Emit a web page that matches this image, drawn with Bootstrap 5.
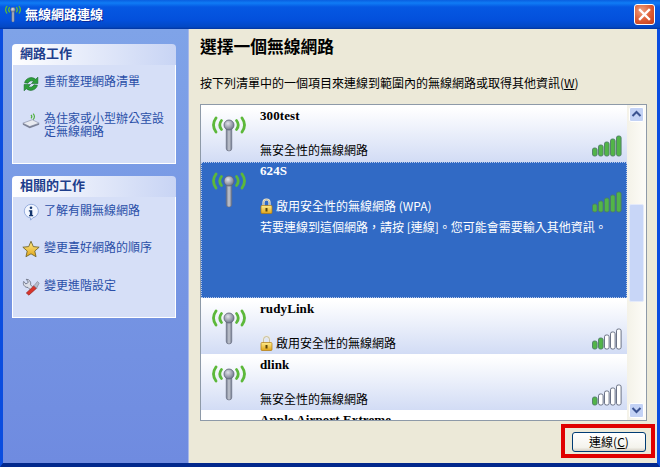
<!DOCTYPE html>
<html lang="zh-Hant">
<head>
  <meta charset="UTF-8" />
  <title>無線網路連線</title>
  <link href="https://cdn.jsdelivr.net/npm/bootstrap@5.3.0/dist/css/bootstrap.min.css" rel="stylesheet" />
  <style>
    html, body { height: 100%; margin: 0; overflow: hidden; }
    body { font-family: "Noto Sans CJK TC", "Liberation Sans", sans-serif; font-size: 12px; line-height: 12px; color: #000; background: #ECE9D8; }

    .xp-window { width: 660px; height: 467px; }
    .xp-title { height: 29px; padding: 0 5px 0 3px; color: #fff; font-size: 13px; font-weight: 700; text-shadow: 1px 1px 0 #0a2a9a;
      background: linear-gradient(#0A5FE0 0, #0F7CF5 3px, #0558E2 7px, #0350DC 20px, #0348C4 27px, #02349E 29px); }
    .xp-title-icon { width: 20px; height: 20px; margin-right: 2px; }
    .xp-close { width: 21px; height: 21px; border: 1px solid #fff; border-radius: 3px; background: radial-gradient(circle at 35% 30%, #F0A080, #DC5A32 55%, #C23A18); }
    .xp-frame { border-left: 3px solid #0A4DE0; border-right: 3px solid #0A4DE0; border-bottom: 4px solid #02288C; min-height: 0; }

    .xp-side { width: 186px; padding: 15px 12px 0 9px; background: linear-gradient(#7FA3E8, #6F8BE0); border-right: 1px solid #A8B8E8; }
    .xp-box + .xp-box { margin-top: 12px; }
    .xp-box-head { height: 21px; padding: 0 0 3px 8px; font-weight: 700; font-size: 13px; color: #1E3E8C; border-radius: 4px 4px 0 0; background: linear-gradient(90deg, #fff, #C8D4F4); }
    .xp-box-body { background: #D6DFF7; border: 1px solid #fff; border-top: 0; padding-left: 7px; color: #2A4FA8; }
    .xp-box-one { height: 99px; }
    .xp-box-two { height: 121px; }
    .xp-task { height: 37.5px; }
    .xp-box-one .xp-task { height: 33.5px; }
    .xp-task-icon { width: 18px; height: 18px; flex: none; margin: 2px 4px 0 2px; }
    .xp-task-two { line-height: 13px; margin-top: 2px; }
    .xp-box-one .xp-task-two { margin-top: 1px; }

    .xp-main { padding: 7px 10px 0 11px; min-width: 0; }
    .xp-heading { font-size: 16.75px; line-height: 20px; font-weight: 700; height: 20px; margin: 0 0 20px; }
    .xp-lead { height: 15px; margin: 0 0 13px; white-space: nowrap; line-height: 14px; }
    .xp-list { height: 317px; border: 1px solid #8E9AA8; background: #fff; }
    .xp-items { width: 426px; overflow: hidden; }
    .xp-net { height: 56px; flex: none; padding: 4px 5px 0 10px; background: linear-gradient(#fff 5%, #D2DCF5); }
    .xp-net.xp-first { height: 57px; }
    .xp-net.xp-active { height: 136px; background: #316AC5; color: #fff; border: 1px dotted #B8C8E8; padding: 1px 4px 0 9px; }
    .xp-antenna { width: 36px; height: 42px; flex: none; margin-top: 4px; margin-right: 13px; }
    .xp-active .xp-antenna { margin-top: 5px; }
    .xp-name { font-family: "Liberation Serif", serif; font-weight: 700; font-size: 13px; line-height: 13px; letter-spacing: .1px; }
    .xp-net-info { position: relative; flex: 1; min-width: 0; }
    .xp-status { position: absolute; left: 0; top: 34px; line-height: 13px; white-space: nowrap; }
    .xp-status.xp-locked { top: 33px; }
    .xp-active .xp-status.xp-locked { top: 34px; }
    .xp-hint { position: absolute; left: 0; top: 56px; line-height: 13px; white-space: nowrap; }
    .xp-lock { width: 13px; height: 16px; margin-right: 3px; vertical-align: -3px; }
    .xp-bars { position: absolute; right: 0; top: 26px; width: 30px; height: 22px; }
    .xp-active .xp-bars { top: 27px; }
    .xp-net-cut { height: 10px; padding: 3px 0 0 59px; background: #fff; overflow: hidden; }
    .xp-scroll { width: 19px; padding: 2px 2px; background: linear-gradient(90deg, #F4F2E8, #FDFCF8); }
    .xp-arrow { width: 15px; height: 15px; flex: none; border: 1px solid #fff; border-radius: 2px; background: #C3D2F5; }
    .xp-track { min-height: 0; position: relative; }
    .xp-thumb { position: absolute; left: 0; top: 82px; width: 15px; height: 98px; background: #C8D6F7; border: 1px solid #E4EAFA; border-radius: 2px; }

    .xp-foot { height: 43px; }
    .xp-connect { position: relative; width: 74px; height: 20px; margin: 11px 1px 0 0; padding: 0; font-size: 12px; line-height: 18px; color: #000; border: 1px solid #003C74; border-radius: 3px; background: linear-gradient(#fff, #F4F3EC 80%, #D6D0C5); }
    .xp-connect:hover { color: #000; }
    .xp-mark { position: absolute; left: -12px; right: -10px; top: -9px; bottom: -7px; border: 4px solid #E00000; pointer-events: none; }
    .xp-u { text-decoration: underline; }
  </style>
</head>
<body>
  <svg width="0" height="0" class="position-absolute">
    <defs>
      <linearGradient id="mast" x1="0" x2="1" y1="0" y2="0"><stop offset="0" stop-color="#6E7688"/><stop offset=".5" stop-color="#C4C8D2"/><stop offset="1" stop-color="#6E7688"/></linearGradient>
      <radialGradient id="ball" cx=".4" cy=".35" r=".7"><stop offset="0" stop-color="#E0E2EA"/><stop offset="1" stop-color="#6A7084"/></radialGradient>
      <linearGradient id="gold" x1="0" x2="0" y1="0" y2="1"><stop offset="0" stop-color="#FFEC8C"/><stop offset="1" stop-color="#E0A418"/></linearGradient>
      <symbol id="antenna" viewBox="0 0 36 42">
        <g fill="none" stroke="#5CB83A" stroke-width="2.8" stroke-linecap="round">
          <path d="M5 5 Q0 12 5 19"/>
          <path d="M10.5 7.5 Q7 12 10.5 16.5"/>
          <path d="M31 5 Q36 12 31 19"/>
          <path d="M25.5 7.5 Q29 12 25.5 16.5"/>
        </g>
        <rect x="15.2" y="13" width="5.6" height="25" rx="2.8" fill="url(#mast)" stroke="#666C80" stroke-width=".6"/>
        <circle cx="18" cy="12" r="5" fill="url(#ball)" stroke="#5C6276" stroke-width=".8"/>
      </symbol>
      <symbol id="lock" viewBox="0 0 13 16">
        <path d="M3.5 8 V4.5 a3 3 0 0 1 6 0 V8" fill="none" stroke="#F0ECD8" stroke-width="2.2"/>
        <path d="M3.5 8 V4.5 a3 3 0 0 1 6 0 V8" fill="none" stroke="#9A9070" stroke-width=".5"/>
        <rect x="1" y="7.5" width="11" height="8" rx="1" fill="url(#gold)" stroke="#B07A10" stroke-width=".7"/>
        <rect x="5.5" y="10" width="2" height="3.5" fill="#5A4208"/>
      </symbol>
      <symbol id="refresh" viewBox="0 0 21 21">
        <path d="M3 9 A8 8 0 0 1 16 5 L18.5 2.5 V10 H11 L13.5 7.5 A4.5 4.5 0 0 0 7 9.5 Z" fill="#2E9E3A" stroke="#16682A" stroke-width=".7"/>
        <path d="M18 12 A8 8 0 0 1 5 16 L2.5 18.5 V11 H10 L7.5 13.5 A4.5 4.5 0 0 0 14 11.5 Z" fill="#2E9E3A" stroke="#16682A" stroke-width=".7"/>
      </symbol>
      <symbol id="router" viewBox="0 0 21 21">
        <path d="M1 13 L12 9 L20 13 L9 17 Z" fill="#E8EAF0" stroke="#8088A0" stroke-width=".7"/>
        <path d="M1 13 V15 L9 19 L20 15 V13 L9 17 Z" fill="#7C8296"/>
        <g fill="none" stroke="#4CAF3A" stroke-width="1.3"><path d="M13 2 Q16 5.5 13 9"/><path d="M10.5 3.5 Q12.5 5.5 10.5 7.5"/></g>
      </symbol>
      <symbol id="info" viewBox="0 0 21 21">
        <path d="M10.5 1.5 a8.5 8 0 0 1 2 15.8 L10 20 V17.4 A8.5 8 0 0 1 10.5 1.5 Z" fill="#F2F6FF" stroke="#8AA4D8"/>
        <rect x="9" y="4" width="3" height="3" rx="1.5" fill="#14366E"/>
        <path d="M8 8.5 H12 V14 H13 V15.5 H8.2 V14 H9.2 V10 H8 Z" fill="#14366E"/>
      </symbol>
      <symbol id="star" viewBox="0 0 21 21">
        <path d="M10.5 1.5 L13.2 7.7 L20 8.4 L14.9 12.9 L16.4 19.5 L10.5 16.1 L4.6 19.5 L6.1 12.9 L1 8.4 L7.8 7.7 Z" fill="url(#gold)" stroke="#6E6228" stroke-width="1"/>
      </symbol>
      <symbol id="tools" viewBox="0 0 21 21">
        <path d="M2 4 a5 5 0 0 0 5 7 L11 15 L14 12 L10 8 A5 5 0 0 0 5 1.5 L7.5 5 L4.5 7 Z" fill="#DDE0E8" stroke="#5E6478" stroke-width=".9"/>
        <path d="M5 17.5 L14 9 L17 12 L8 20 Z" fill="#D8342C" stroke="#8A1C18" stroke-width=".7"/>
        <path d="M14 9 L18 4 L20 6 L17 12 Z" fill="#B8BDCB" stroke="#6C7286" stroke-width=".6"/>
      </symbol>
    </defs>
  </svg>

  <div class="xp-window d-flex flex-column">
    <div class="xp-title d-flex align-items-center flex-none">
      <svg class="xp-title-icon"><use href="#antenna"/></svg>
      <span class="flex-grow-1">無線網路連線</span>
      <div class="xp-close d-flex align-items-center justify-content-center">
        <svg width="13" height="13" viewBox="0 0 13 13"><path d="M2 2 L11 11 M11 2 L2 11" stroke="#fff" stroke-width="2.4" stroke-linecap="square"/></svg>
      </div>
    </div>

    <div class="xp-frame d-flex flex-grow-1">
      <aside class="xp-side flex-shrink-0">
        <div class="xp-box">
          <div class="xp-box-head d-flex align-items-center">網路工作</div>
          <div class="xp-box-body xp-box-one pt-1">
            <div class="xp-task d-flex align-items-start pt-1">
              <svg class="xp-task-icon"><use href="#refresh"/></svg><span class="xp-task-two">重新整理網路清單</span>
            </div>
            <div class="xp-task d-flex align-items-start pt-2">
              <svg class="xp-task-icon"><use href="#router"/></svg><span class="xp-task-two">為住家或小型辦公室設定無線網路</span>
            </div>
          </div>
        </div>
        <div class="xp-box">
          <div class="xp-box-head d-flex align-items-center">相關的工作</div>
          <div class="xp-box-body xp-box-two">
            <div class="xp-task d-flex align-items-start pt-1">
              <svg class="xp-task-icon"><use href="#info"/></svg><span class="xp-task-two">了解有關無線網路</span>
            </div>
            <div class="xp-task d-flex align-items-start pt-1">
              <svg class="xp-task-icon"><use href="#star"/></svg><span class="xp-task-two">變更喜好網路的順序</span>
            </div>
            <div class="xp-task d-flex align-items-start pt-1">
              <svg class="xp-task-icon"><use href="#tools"/></svg><span class="xp-task-two">變更進階設定</span>
            </div>
          </div>
        </div>
      </aside>

      <main class="xp-main flex-grow-1">
        <h1 class="xp-heading">選擇一個無線網路</h1>
        <p class="xp-lead">按下列清單中的一個項目來連線到範圍內的無線網路或取得其他資訊(<span class="xp-u">W</span>)</p>

        <div class="xp-list d-flex">
          <div class="xp-items d-flex flex-column">
            <div class="xp-net xp-first d-flex">
              <svg class="xp-antenna"><use href="#antenna"/></svg>
              <div class="xp-net-info">
                <div class="xp-name">300test</div>
                <div class="xp-status">無安全性的無線網路</div>
                <svg class="xp-bars" viewBox="0 0 30 22" data-level="5"></svg>
              </div>
            </div>
            <div class="xp-net xp-active d-flex">
              <svg class="xp-antenna"><use href="#antenna"/></svg>
              <div class="xp-net-info">
                <div class="xp-name">624S</div>
                <div class="xp-status xp-locked"><svg class="xp-lock"><use href="#lock"/></svg>啟用安全性的無線網路 (WPA)</div>
                <div class="xp-hint">若要連線到這個網路，請按 [連線]。您可能會需要輸入其他資訊。</div>
                <svg class="xp-bars" viewBox="0 0 30 22" data-level="5"></svg>
              </div>
            </div>
            <div class="xp-net d-flex">
              <svg class="xp-antenna"><use href="#antenna"/></svg>
              <div class="xp-net-info">
                <div class="xp-name">rudyLink</div>
                <div class="xp-status xp-locked"><svg class="xp-lock"><use href="#lock"/></svg>啟用安全性的無線網路</div>
                <svg class="xp-bars" viewBox="0 0 30 22" data-level="2"></svg>
              </div>
            </div>
            <div class="xp-net d-flex">
              <svg class="xp-antenna"><use href="#antenna"/></svg>
              <div class="xp-net-info">
                <div class="xp-name">dlink</div>
                <div class="xp-status">無安全性的無線網路</div>
                <svg class="xp-bars" viewBox="0 0 30 22" data-level="1"></svg>
              </div>
            </div>
            <div class="xp-net-cut"><div class="xp-name">Apple Airport Extreme</div></div>
          </div>
          <div class="xp-scroll d-flex flex-column flex-grow-1">
            <div class="xp-arrow d-flex align-items-center justify-content-center">
              <svg width="11" height="8" viewBox="0 0 11 8"><path d="M1.5 6 L5.5 2 L9.5 6" fill="none" stroke="#3A5290" stroke-width="2"/></svg>
            </div>
            <div class="xp-track flex-grow-1"><div class="xp-thumb"></div></div>
            <div class="xp-arrow d-flex align-items-center justify-content-center">
              <svg width="11" height="8" viewBox="0 0 11 8"><path d="M1.5 2 L5.5 6 L9.5 2" fill="none" stroke="#3A5290" stroke-width="2"/></svg>
            </div>
          </div>
        </div>

        <div class="xp-foot d-flex justify-content-end">
          <button class="btn xp-connect" type="button">連線(<span class="xp-u">C</span>)<span class="xp-mark"></span></button>
        </div>
      </main>
    </div>
  </div>

  <script>
    // signal bars: 5 bars growing left to right, filled up to data-level
    document.querySelectorAll(".xp-bars").forEach(function (svg) {
      const level = Number(svg.dataset.level);
      let out = "";
      for (let i = 0; i < 5; i++) {
        const h = 8 + i * 3;
        const on = i < level;
        out += `<rect x="${i * 6 + 0.5}" y="${21 - h}" width="4.6" height="${h}" rx="1.8"
          fill="${on ? "#52B548" : "#fff"}" stroke="${on ? "#4E7A68" : "#5C6478"}" stroke-width="0.9"/>`;
      }
      svg.innerHTML = out;
    });
  </script>
  <script src="https://cdn.jsdelivr.net/npm/bootstrap@5.3.0/dist/js/bootstrap.bundle.min.js"></script>
</body>
</html>
